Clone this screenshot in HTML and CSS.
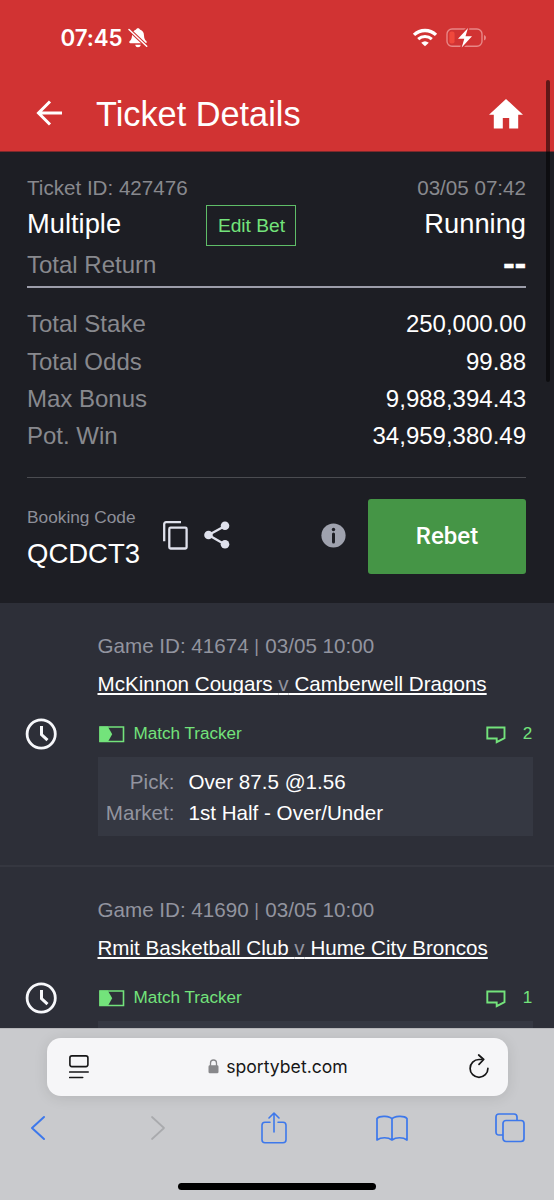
FILE: index.html
```html
<!DOCTYPE html>
<html lang="en">
<head>
<meta charset="utf-8">
<title>Ticket Details</title>
<link rel="stylesheet" href="styles.css">
</head>
<body>
<svg class="defs" width="0" height="0" aria-hidden="true">
  <symbol id="clock" viewBox="0 0 32 32"><circle cx="16.200" cy="16" r="14.100" fill="none" stroke="#f7f8fb" stroke-width="2.800"/><path d="M16.500 8v8.600l6 5.600" fill="none" stroke="#f7f8fb" stroke-width="3"/></symbol>
  <symbol id="tracker" viewBox="0 0 26 17"><path d="M1 1h23.500v14.500H1z" fill="none" stroke="#73e37b" stroke-width="1.600"/><path d="M.5.5h8.300l4.400 7.700-4.400 7.800H.5z" fill="#73e37b"/></symbol>
  <symbol id="comment" viewBox="0 0 20 18"><path d="M1.300 1.500h17.200v10.700l-7.800 4v-3.700H1.300z" fill="none" stroke="#73e37b" stroke-width="1.900"/></symbol>
</svg>
<div class="phone">
  <header class="header">
    <div class="status">
      <span class="time">07:45</span>
      <svg class="bell" width="20" height="20" viewBox="0 0 20 20"><path d="M10 .3c1.100 0 1.700.6 1.900 1.300 2.800.9 4 3 4.100 5.800.1 3.200 1 4.400 2.300 5.700.8.9.5 2.200-.8 2.200h-15c-1.300 0-1.600-1.300-.8-2.200C3 11.800 3.900 10.600 4 7.400c.1-2.800 1.300-4.900 4.100-5.800C8.300.9 8.900.3 10 .3zM7.200 16.700h5.600c-.3 1.700-1.400 2.500-2.800 2.500s-2.500-.8-2.800-2.500z" fill="#fff"/><path d="M1 1.500 18.700 18.300" stroke="#d13333" stroke-width="3.600"/><path d="M1 1.500 18.700 18.300" stroke="#fff" stroke-width="1.500" stroke-linecap="round"/></svg>
      <svg class="wifi" width="26" height="19" viewBox="0 0 26 19"><path d="M2 6.900a16 16 0 0 1 22 0" fill="none" stroke="#fff" stroke-width="3.300"/><path d="M6.200 11.200a10 10 0 0 1 13.600 0" fill="none" stroke="#fff" stroke-width="3"/><path d="M9.200 14.700q3.800-3 7.600 0L13 18.300z" fill="#fff"/></svg>
      <svg class="battery" width="41" height="20" viewBox="0 0 41 20"><rect x="1" y="1" width="35" height="17.300" rx="5" fill="none" stroke="#e88786" stroke-width="1.400"/><path d="M38 7q2 .6 2 2.700T38 12.400z" fill="#e88786"/><rect x="3.300" y="3.500" width="5.300" height="12" rx="2.200" fill="#f0483c"/><path d="M22 0 12 10.700h6.300L15.700 19.500 26 8.300h-6.500z" fill="#fff" stroke="#d13333" stroke-width="3" paint-order="stroke"/></svg>
    </div>
    <div class="titlebar">
      <svg class="back" width="26" height="26" viewBox="0 0 26 26"><path d="M26 13H2M14 1.500 2.500 13 14 24.500" fill="none" stroke="#fff" stroke-width="3"/></svg>
      <h1 class="title">Ticket Details</h1>
      <svg class="home" width="34" height="30" viewBox="0 0 34 30"><path d="M17 0 34 15.700h-4.800V29.500h-9V19h-6.400v10.500H4.800V15.700H0z" fill="#fff"/></svg>
    </div>
  </header>
  <main class="content">
    <section class="summary">
      <div class="row meta"><span>Ticket ID: 427476</span><span>03/05 07:42</span></div>
      <div class="row state"><span class="kind">Multiple</span><button class="edit">Edit Bet</button><span class="running">Running</span></div>
      <div class="row return"><span>Total Return</span><b class="dashes">--</b></div>
      <dl class="totals">
        <div class="row"><dt>Total Stake</dt><dd>250,000.00</dd></div>
        <div class="row"><dt>Total Odds</dt><dd>99.88</dd></div>
        <div class="row"><dt>Max Bonus</dt><dd>9,988,394.43</dd></div>
        <div class="row"><dt>Pot. Win</dt><dd>34,959,380.49</dd></div>
      </dl>
      <div class="booking">
        <div class="code"><span class="code-label">Booking Code</span><span class="code-value">QCDCT3</span></div>
        <svg class="copy" width="25" height="29" viewBox="0 0 25 29"><path d="M1.200 20.300V3.200q0-2 2-2H18" fill="none" stroke="#dfe1ec" stroke-width="2.300"/><rect x="6.300" y="6.700" width="17.300" height="20.800" rx="1.300" fill="none" stroke="#dfe1ec" stroke-width="2.300"/></svg>
        <svg class="share" width="26" height="28" viewBox="0 0 26 28"><path d="M21 5 4.500 14 21 23.500" fill="none" stroke="#dfe1ec" stroke-width="2.300"/><circle cx="21" cy="4.700" r="4.300" fill="#dfe1ec"/><circle cx="4.500" cy="14" r="4.300" fill="#dfe1ec"/><circle cx="21" cy="23.300" r="4.300" fill="#dfe1ec"/></svg>
        <svg class="info" width="25" height="25" viewBox="0 0 25 25"><circle cx="12.500" cy="12.500" r="12.100" fill="#9fa2ae"/><circle cx="12.500" cy="6.500" r="1.700" fill="#1d1e24"/><path d="M12.500 11v8" stroke="#1d1e24" stroke-width="3" stroke-linecap="round"/></svg>
        <button class="rebet">Rebet</button>
      </div>
    </section>
    <article class="game">
      <svg class="clock"><use href="#clock"/></svg>
      <div class="details">
        <p class="game-id">Game ID: 41674 <span class="bar">|</span> 03/05 10:00</p>
        <a class="teams">McKinnon Cougars <i>v</i> Camberwell Dragons</a>
        <div class="links"><svg class="tracker"><use href="#tracker"/></svg><span>Match Tracker</span><svg class="comment"><use href="#comment"/></svg><span class="count">2</span></div>
        <dl class="pick"><dt>Pick:</dt><dd>Over 87.5 @1.56</dd><dt>Market:</dt><dd>1st Half - Over/Under</dd></dl>
      </div>
    </article>
    <article class="game">
      <svg class="clock"><use href="#clock"/></svg>
      <div class="details">
        <p class="game-id">Game ID: 41690 <span class="bar">|</span> 03/05 10:00</p>
        <a class="teams">Rmit Basketball Club <i>v</i> Hume City Broncos</a>
        <div class="links"><svg class="tracker"><use href="#tracker"/></svg><span>Match Tracker</span><svg class="comment"><use href="#comment"/></svg><span class="count">1</span></div>
        <div class="pick"></div>
      </div>
    </article>
  </main>
  <footer class="browser">
    <div class="address">
      <svg width="20" height="24" viewBox="0 0 20 24"><rect x=".9" y=".9" width="18" height="10.700" rx="2" fill="none" stroke="#161617" stroke-width="1.600"/><path d="M.7 17h18.500M.7 22.500h13" stroke="#161617" stroke-width="1.600" stroke-linecap="round"/></svg>
      <span class="domain"><svg width="11" height="15" viewBox="0 0 11 15"><path d="M2.500 7V4a3 3 0 0 1 6 0v3" fill="none" stroke="#88888b" stroke-width="1.300"/><rect x=".5" y="6.300" width="10" height="8" rx="1.400" fill="#88888b"/></svg><span>sportybet.com</span></span>
      <svg width="20" height="25" viewBox="0 0 20 25"><path d="M12.800 5.500H10a8.900 8.900 0 1 0 8.900 8.900" fill="none" stroke="#161617" stroke-width="1.700" stroke-linecap="round"/><path d="m9.700 1 5 4.500-4.700 4.800" fill="none" stroke="#161617" stroke-width="1.700" stroke-linecap="round" stroke-linejoin="round"/></svg>
    </div>
    <nav class="tools">
      <svg width="16" height="26" viewBox="0 0 16 26"><path d="M14 2 2 13l12 11" fill="none" stroke="#3d78eb" stroke-width="2" stroke-linecap="round" stroke-linejoin="round"/></svg>
      <svg class="forward" width="16" height="26" viewBox="0 0 16 26"><path d="m2 2 12 11L2 24" fill="none" stroke="#a9aaad" stroke-width="1.700" stroke-linecap="round" stroke-linejoin="round"/></svg>
      <svg width="26" height="32" viewBox="0 0 26 32"><path d="M9 10.300H4q-3 0-3 3v14.400q0 3 3 3h18q3 0 3-3V13.300q0-3-3-3h-5M13 20V1.500M8 6l5-5 5 5" fill="none" stroke="#3d78eb" stroke-width="1.600" stroke-linecap="round" stroke-linejoin="round"/></svg>
      <svg width="32" height="27" viewBox="0 0 32 27"><path d="M16 4C14 1 4 .2 1 3.500V25c4-3 11-3 15 0 4-3 11-3 15 0V3.500C28 .2 18 1 16 4zM16 4v21" fill="none" stroke="#3d78eb" stroke-width="1.700" stroke-linejoin="round"/></svg>
      <svg width="30" height="30" viewBox="0 0 30 30"><path d="M8 22H4q-3 0-3-3V4q0-3 3-3h15q3 0 3 3v3" fill="none" stroke="#3d78eb" stroke-width="1.700"/><rect x="8" y="7.500" width="21" height="21" rx="3" fill="none" stroke="#3d78eb" stroke-width="1.700"/></svg>
    </nav>
    <div class="indicator"></div>
  </footer>
  <div class="scrollbar"></div>
</div>
</body>
</html>
```
FILE: styles.css
```css
* { box-sizing: border-box; }
body, h1, p, dl, dd { margin: 0; }
body { background: #2d2f38; font-family: "Liberation Sans", Arial, sans-serif; }
svg { display: block; flex: none; }
.defs { position: absolute; }
.phone { position: relative; display: flex; flex-direction: column; width: 554px; height: 1200px; overflow: hidden; }

.header { flex: none; height: 152px; background: linear-gradient(#d13333 151px, #7d292c 151px); color: #fff; }
.status { display: flex; align-items: center; height: 76px; padding: 0 67px 0 60.500px; }
.time { width: 67.500px; font: 600 22.3px/76px Inter, sans-serif; letter-spacing: -.1px; }
.wifi { margin-left: auto; margin-top: -2px; }
.battery { margin-left: 8px; margin-top: -1px; }
.titlebar { display: flex; align-items: center; height: 75px; padding: 0 31px 0 36px; }
.back { margin-bottom: 1px; }
.title { margin-left: 34px; font-size: 34.300px; font-weight: 400; line-height: 76px; }
.home { margin-left: auto; }

.content { flex: none; height: 876px; overflow: hidden; }
.summary { height: 451px; padding: 22px 28px 0 27px; background: #1d1e24; color: #88898e; }
.row { display: flex; align-items: center; justify-content: space-between; }
.meta { height: 28px; font-size: 20.600px; }
.state { height: 41px; margin-top: 3px; color: #fff; font-size: 27.300px; }
.kind { width: 179px; line-height: 36px; margin-bottom: 4px; }
.running { margin-left: auto; margin-bottom: 4px; }
.edit { width: 90px; height: 41px; padding: 1px 0 0 1px; border: 1.500px solid #5fbd68; background: transparent; color: #73e37b; font: 19.200px "Liberation Sans", Arial, sans-serif; }
.return { height: 42px; padding-bottom: 3px; border-bottom: 2px solid #9c9daa; font-size: 24px; }
.dashes { margin-bottom: 3px; color: #fff; font-size: 34px; line-height: 32px; -webkit-text-stroke: .6px #fff; }
.totals { height: 190px; padding-top: 17.600px; border-bottom: 1px solid #4b4c51; font-size: 24px; }
.totals .row { height: 37.300px; }
.totals dd { color: #fff; }
.booking { display: flex; align-items: center; height: 117px; }
.code { display: flex; flex-direction: column; width: 136px; padding-top: 4px; }
.code-label { font-size: 17.300px; line-height: 28px; color: #8d8f99; }
.code-value { margin-top: 3px; font-size: 27.500px; line-height: 40px; color: #fff; }
.copy, .share, .info { margin-bottom: 3px; }
.share { margin-left: 16px; }
.info { margin-left: auto; }
.rebet { width: 158px; height: 75px; margin-left: 22px; padding: 0 0 2px; border: 0; border-radius: 3px; background: #459546; color: #fff; font: 500 24px Roboto, sans-serif; }

.game { display: flex; height: 264px; padding: 27px 21px 0 25px; border-bottom: 2px solid #353740; background: #2d2f38; }
.clock { width: 32px; height: 32px; margin-top: 88px; }
.details { flex: 1; margin-left: 40.500px; }
.game-id { height: 33px; font-size: 20.600px; line-height: 32px; color: #92949f; }
.bar { display: inline-block; width: 5.300px; font-size: 18px; line-height: 20px; vertical-align: 1px; }
.teams { display: block; height: 42px; color: #fff; font-size: 20.600px; line-height: 42px; text-decoration: underline; text-underline-offset: 2px; text-decoration-thickness: 1.500px; text-decoration-skip-ink: none; }
.teams i { color: #92949f; font-style: normal; }
.links { display: flex; align-items: center; height: 46px; margin-top: 6px; color: #73e37b; font-size: 17.100px; }
.tracker { width: 26px; height: 17px; margin: 1px 9px 0 1px; }
.comment { width: 20px; height: 18px; margin: 2px 16px 0 auto; }
.count { width: 11px; text-align: center; }
.pick { display: grid; grid-template-columns: 77px 1fr; grid-auto-rows: 31px; column-gap: 14px; height: 79px; padding-top: 9px; background: #353842; font-size: 20.600px; line-height: 31px; }
.pick dt { color: #92949f; text-align: right; }
.pick dd { color: #fff; }

.browser { flex: 1; border-top: 1px solid #b6b7ba; background: #c9cacd; }
.address { display: flex; align-items: center; justify-content: space-between; width: 461px; height: 58px; margin: 9px 0 0 46.500px; padding: 0 18px 1px 22px; border-radius: 14px; background: #f6f6f8; box-shadow: 0 2px 14px rgba(0, 0, 0, .1); }
.domain { display: flex; align-items: center; gap: 7px; padding-right: 2px; color: #161617; font: 17.600px/26px Inter, sans-serif; }
.tools { display: grid; grid-template-columns: repeat(5, 118px); justify-content: center; place-items: center; width: 548px; height: 64px; }
.forward { margin-left: 4px; }
.indicator { width: 198px; height: 7px; margin: 23px auto 0; border-radius: 4px; background: #000; }
.scrollbar { position: absolute; top: 80px; right: 4px; width: 4px; height: 302px; border-radius: 2px; background: rgba(0, 0, 0, .55); }
```
